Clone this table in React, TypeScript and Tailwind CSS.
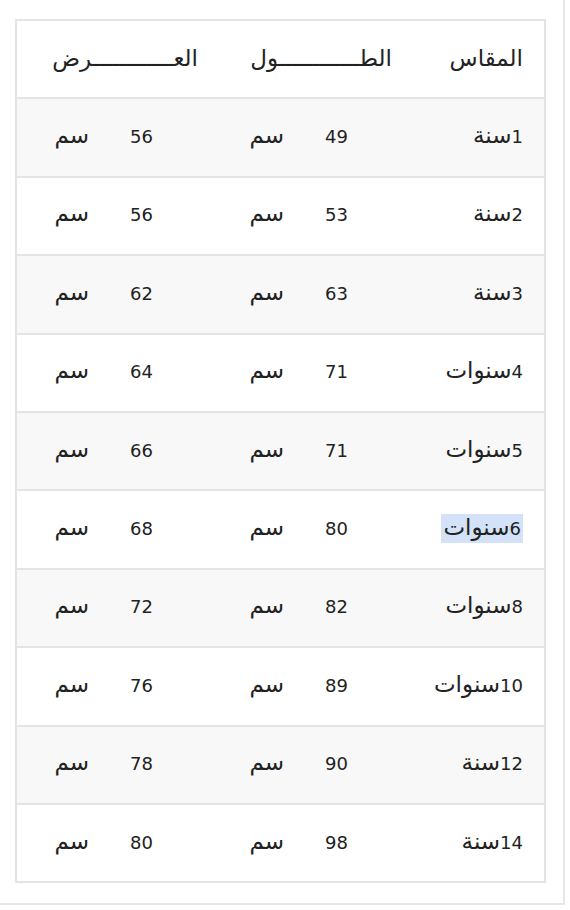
const ROWS: string[][] = [
  ["1", "سنة", "49", "56"],
  ["2", "سنة", "53", "56"],
  ["3", "سنة", "63", "62"],
  ["4", "سنوات", "71", "64"],
  ["5", "سنوات", "71", "66"],
  ["6", "سنوات", "80", "68"],
  ["8", "سنوات", "82", "72"],
  ["10", "سنوات", "89", "76"],
  ["12", "سنة", "90", "78"],
  ["14", "سنة", "98", "80"],
];

function Ar({ children }: { children: React.ReactNode }) {
  return <span className="text-[23px] leading-none">{children}</span>;
}

function Measure({ value, pad }: { value: string; pad: string }) {
  return (
    <div className={`flex items-center ${pad}`}>
      <span>{value}</span>
      <span className="mr-[41px]"><Ar>سم</Ar></span>
    </div>
  );
}

export default function App() {
  return (
    <div className="w-[565px] h-[905px] bg-white border-r-2 border-b-2 border-[#e6e6e6] pt-[19px] pl-[15px]"
      style={{ fontFamily: '"DejaVu Sans", sans-serif' }}>
      <div dir="rtl" className="w-[531px] border-2 border-[#e4e4e4] text-[18px] text-[#222]">

        {/* Header */}
        <div className="grid grid-cols-[128px_196px_203px] h-[76.4px] items-center bg-white">
          <div className="pr-[21px]"><Ar>المقاس</Ar></div>
          <div className="pr-[24px]"><Ar>الطــــــــــــول</Ar></div>
          <div className="pr-[22px]"><Ar>العــــــــــــرض</Ar></div>
        </div>

        {/* Rows */}
        {ROWS.map(([num, unit, len, wid], i) => (
          <div key={num}
            className={`grid grid-cols-[128px_196px_203px] h-[78.4px] pb-[2px] items-center border-t-2 border-[#e4e4e4] ${i % 2 === 0 ? "bg-[#f8f8f8]" : "bg-white"}`}>
            <div className="pr-[21px]">
              <span className={num === "6" ? "bg-[#d3e2f8] px-[2px] py-[4px]" : ""}>
                {num}<Ar>{unit}</Ar>
              </span>
            </div>
            <div className="pr-[21px]"><Measure value={len} pad="pr-[47px]" /></div>
            <div className="pr-[19px]"><Measure value={wid} pad="pr-[48px]" /></div>
          </div>
        ))}
      </div>
    </div>
  );
}
